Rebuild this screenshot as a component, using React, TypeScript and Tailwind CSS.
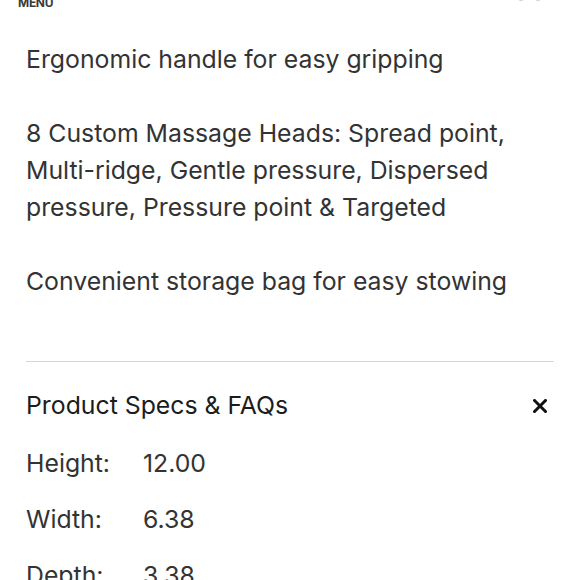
import React from 'react';

const features = [
  'Ergonomic handle for easy gripping',
  '8 Custom Massage Heads: Spread point, Multi-ridge, Gentle pressure, Dispersed pressure, Pressure point & Targeted',
  'Convenient storage bag for easy stowing',
];

const specs = [
  { label: 'Height:', value: '12.00' },
  { label: 'Width:', value: '6.38' },
  { label: 'Depth:', value: '3.38' },
];

const App: React.FC = () => {
  return (
    <div className="w-[580px] h-[580px] overflow-hidden bg-white font-['Inter','Liberation_Sans',sans-serif] text-[#333]">
      {/* top bar, scrolled mostly out of view */}
      <header className="flex justify-between items-start h-[44px] -mt-[3px] pl-[18px] pr-[38px]">
        <span className="text-[12px] leading-[12px] font-bold text-[#3a3a3a] tracking-tight">MENU</span>
        <div className="flex gap-[9px] mt-[-4px]">
          <span className="w-[8px] h-[8px] rounded-full border border-[#c9c9c9]" />
          <span className="w-[8px] h-[8px] rounded-full border border-[#c9c9c9]" />
        </div>
      </header>

      <section className="px-[26px]">
        <div className="space-y-[37px]">
          {features.map((text, i) => (
            <p key={i} className="text-[24.8px] leading-[37px]">
              {text}
            </p>
          ))}
        </div>

        <div className="mt-[61px] border-t border-[#d6d6d6]" />

        <div className="flex justify-between items-center pt-[25px]">
          <h2 className="text-[24.8px] leading-[37px] text-[#1c1c1c]">Product Specs &amp; FAQs</h2>
          <button className="mr-[7px] text-[#111]" aria-label="Close">
            <svg width="14" height="14" viewBox="0 0 14 14" fill="none">
              <path d="M1.5 1.5L12.5 12.5M12.5 1.5L1.5 12.5" stroke="currentColor" strokeWidth="3" strokeLinecap="square" />
            </svg>
          </button>
        </div>

        <div className="flex flex-col gap-[19px] mt-[21px]">
          {specs.map((s) => (
            <div key={s.label} className="flex text-[24.8px] leading-[37px]">
              <span className="w-[117px]">{s.label}</span>
              <span>{s.value}</span>
            </div>
          ))}
        </div>
      </section>
    </div>
  );
};

export default App;
